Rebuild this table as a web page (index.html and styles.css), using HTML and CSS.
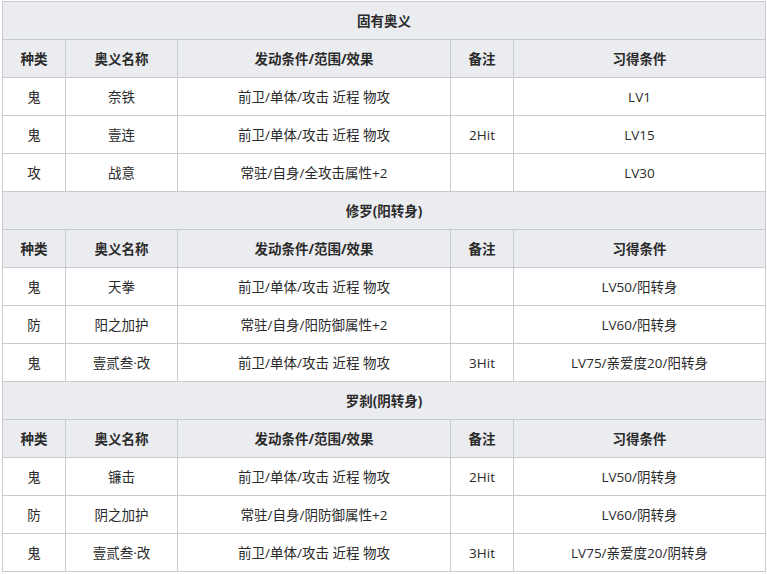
FILE: index.html
```html
<!DOCTYPE html>
<html lang="zh">
<head>
<meta charset="utf-8">
<title>奥义</title>
<link rel="stylesheet" href="styles.css">
</head>
<body>
<table class="ougi">
<colgroup>
<col class="c1"><col class="c2"><col class="c3"><col class="c4"><col class="c5">
</colgroup>
<tbody>
<tr><th colspan="5" class="sec">固有奥义</th></tr>
<tr class="hd"><th>种类</th><th>奥义名称</th><th>发动条件/范围/效果</th><th>备注</th><th>习得条件</th></tr>
<tr><td>鬼</td><td>奈铁</td><td>前卫/单体/攻击 近程 物攻</td><td></td><td>LV1</td></tr>
<tr><td>鬼</td><td>壹连</td><td>前卫/单体/攻击 近程 物攻</td><td>2Hit</td><td>LV15</td></tr>
<tr><td>攻</td><td>战意</td><td>常驻/自身/全攻击属性+2</td><td></td><td>LV30</td></tr>
<tr><th colspan="5" class="sec">修罗(阳转身)</th></tr>
<tr class="hd"><th>种类</th><th>奥义名称</th><th>发动条件/范围/效果</th><th>备注</th><th>习得条件</th></tr>
<tr><td>鬼</td><td>天拳</td><td>前卫/单体/攻击 近程 物攻</td><td></td><td>LV50/阳转身</td></tr>
<tr><td>防</td><td>阳之加护</td><td>常驻/自身/阳防御属性+2</td><td></td><td>LV60/阳转身</td></tr>
<tr><td>鬼</td><td>壹贰叁·改</td><td>前卫/单体/攻击 近程 物攻</td><td>3Hit</td><td>LV75/亲爱度20/阳转身</td></tr>
<tr><th colspan="5" class="sec">罗刹(阴转身)</th></tr>
<tr class="hd"><th>种类</th><th>奥义名称</th><th>发动条件/范围/效果</th><th>备注</th><th>习得条件</th></tr>
<tr><td>鬼</td><td>镰击</td><td>前卫/单体/攻击 近程 物攻</td><td>2Hit</td><td>LV50/阴转身</td></tr>
<tr><td>防</td><td>阴之加护</td><td>常驻/自身/阴防御属性+2</td><td></td><td>LV60/阴转身</td></tr>
<tr><td>鬼</td><td>壹贰叁·改</td><td>前卫/单体/攻击 近程 物攻</td><td>3Hit</td><td>LV75/亲爱度20/阴转身</td></tr>
</tbody>
</table>
</body>
</html>
```
FILE: styles.css
```css
html, body {
  margin: 0;
  padding: 0;
  background: #ffffff;
}
body {
  padding: 1px 0 0 2px;
  font-family: "Open Sans", "Noto Sans CJK SC", sans-serif;
  font-size: 13.5px;
  color: #2a2a2a;
}
.ougi {
  border-collapse: collapse;
  table-layout: fixed;
  width: 763px;
}
.c1 { width: 63px; }
.c2 { width: 112px; }
.c3 { width: 273px; }
.c4 { width: 63px; }
.c5 { width: 252px; }
.ougi th,
.ougi td {
  border: 1px solid #c8ccd1;
  height: 38px;
  padding: 0 4px;
  text-align: center;
  vertical-align: middle;
  line-height: 18px;
  box-sizing: border-box;
}
.ougi th {
  background: #eaecf0;
  font-weight: bold;
}
```
